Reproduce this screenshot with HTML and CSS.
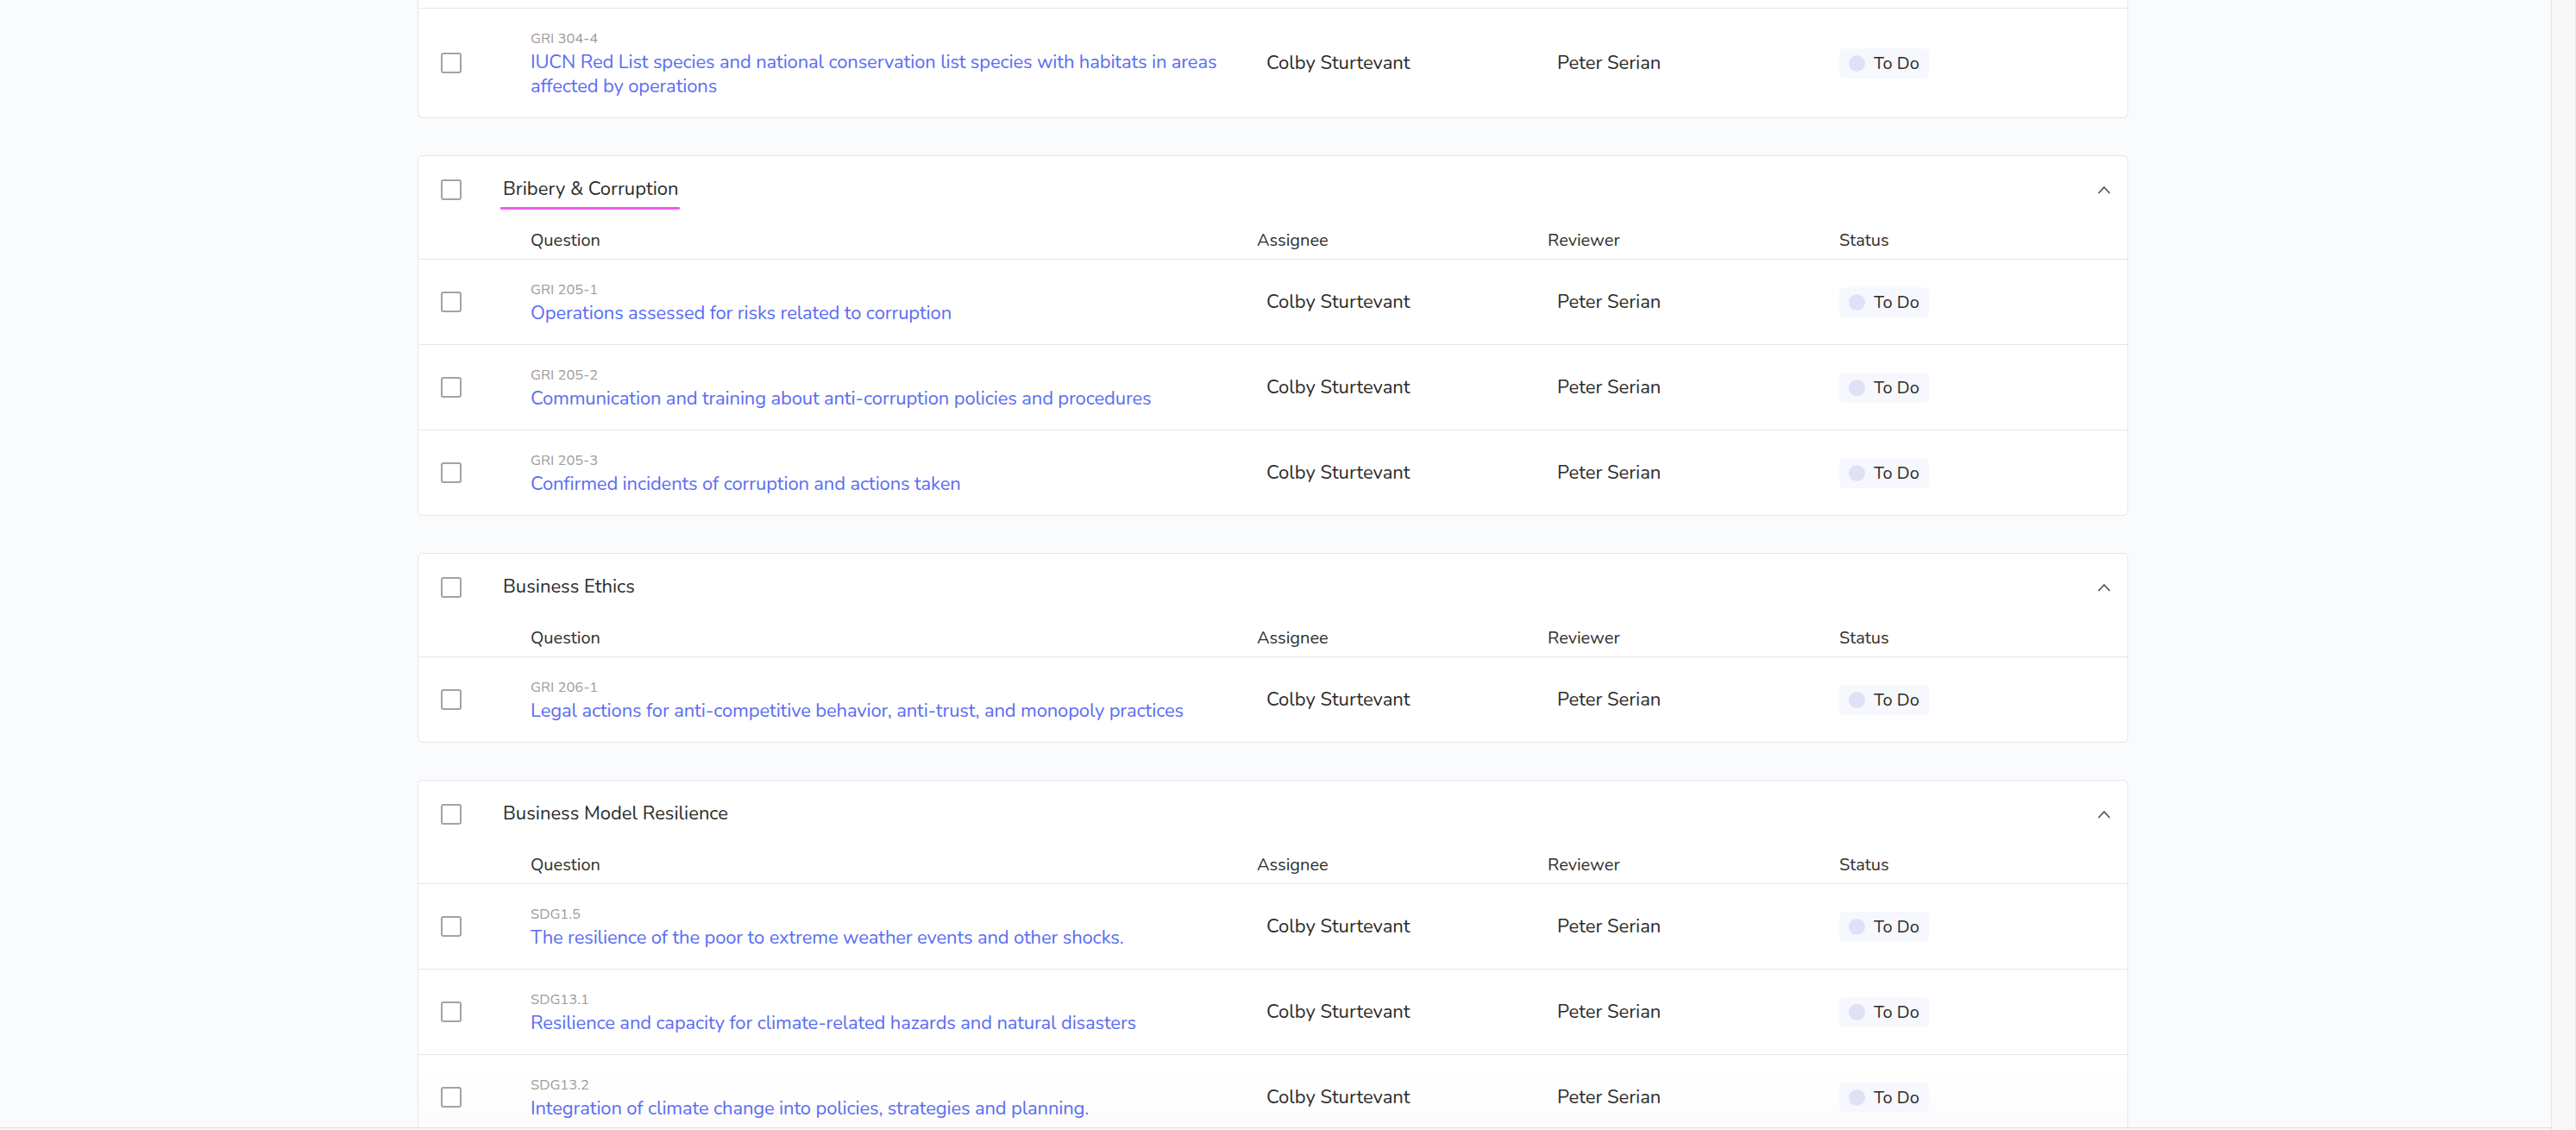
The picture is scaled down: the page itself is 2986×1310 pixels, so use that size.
FILE: index.html
```html
<!DOCTYPE html>
<html lang="en">
<head>
<meta charset="utf-8">
<title>Questions</title>
<link rel="stylesheet" href="styles.css">
</head>
<body>
<div class="window">
  <main class="viewport">
    <div class="list">

      <section class="card card--cut">
        <div class="row">
          <div class="cell-check"><span class="checkbox"></span></div>
          <div class="cell-question">
            <div class="code">GRI 304-4</div>
            <a class="question">IUCN Red List species and national conservation list species with habitats in areas affected by operations</a>
          </div>
          <div class="cell-person">Colby Sturtevant</div>
          <div class="cell-person">Peter Serian</div>
          <div class="cell-status"><span class="pill"><span class="dot"></span>To Do</span></div>
        </div>
      </section>

      <section class="card">
        <div class="card-head">
          <span class="checkbox"></span>
          <span class="title title--active">Bribery &amp; Corruption</span>
          <svg class="chevron" viewBox="0 0 16 10" width="16" height="10"><polyline points="2,8.5 8,2 14,8.5" fill="none" stroke="#555" stroke-width="1.8" stroke-linecap="round" stroke-linejoin="round"/></svg>
        </div>
        <div class="col-head">
          <div></div>
          <div>Question</div>
          <div>Assignee</div>
          <div>Reviewer</div>
          <div>Status</div>
        </div>
        <div class="row">
          <div class="cell-check"><span class="checkbox"></span></div>
          <div class="cell-question">
            <div class="code">GRI 205-1</div>
            <a class="question">Operations assessed for risks related to corruption</a>
          </div>
          <div class="cell-person">Colby Sturtevant</div>
          <div class="cell-person">Peter Serian</div>
          <div class="cell-status"><span class="pill"><span class="dot"></span>To Do</span></div>
        </div>
        <div class="row">
          <div class="cell-check"><span class="checkbox"></span></div>
          <div class="cell-question">
            <div class="code">GRI 205-2</div>
            <a class="question">Communication and training about anti-corruption policies and procedures</a>
          </div>
          <div class="cell-person">Colby Sturtevant</div>
          <div class="cell-person">Peter Serian</div>
          <div class="cell-status"><span class="pill"><span class="dot"></span>To Do</span></div>
        </div>
        <div class="row">
          <div class="cell-check"><span class="checkbox"></span></div>
          <div class="cell-question">
            <div class="code">GRI 205-3</div>
            <a class="question">Confirmed incidents of corruption and actions taken</a>
          </div>
          <div class="cell-person">Colby Sturtevant</div>
          <div class="cell-person">Peter Serian</div>
          <div class="cell-status"><span class="pill"><span class="dot"></span>To Do</span></div>
        </div>
      </section>

      <section class="card">
        <div class="card-head">
          <span class="checkbox"></span>
          <span class="title">Business Ethics</span>
          <svg class="chevron" viewBox="0 0 16 10" width="16" height="10"><polyline points="2,8.5 8,2 14,8.5" fill="none" stroke="#555" stroke-width="1.8" stroke-linecap="round" stroke-linejoin="round"/></svg>
        </div>
        <div class="col-head">
          <div></div>
          <div>Question</div>
          <div>Assignee</div>
          <div>Reviewer</div>
          <div>Status</div>
        </div>
        <div class="row">
          <div class="cell-check"><span class="checkbox"></span></div>
          <div class="cell-question">
            <div class="code">GRI 206-1</div>
            <a class="question">Legal actions for anti-competitive behavior, anti-trust, and monopoly practices</a>
          </div>
          <div class="cell-person">Colby Sturtevant</div>
          <div class="cell-person">Peter Serian</div>
          <div class="cell-status"><span class="pill"><span class="dot"></span>To Do</span></div>
        </div>
      </section>

      <section class="card card--last">
        <div class="card-head">
          <span class="checkbox"></span>
          <span class="title">Business Model Resilience</span>
          <svg class="chevron" viewBox="0 0 16 10" width="16" height="10"><polyline points="2,8.5 8,2 14,8.5" fill="none" stroke="#555" stroke-width="1.8" stroke-linecap="round" stroke-linejoin="round"/></svg>
        </div>
        <div class="col-head">
          <div></div>
          <div>Question</div>
          <div>Assignee</div>
          <div>Reviewer</div>
          <div>Status</div>
        </div>
        <div class="row">
          <div class="cell-check"><span class="checkbox"></span></div>
          <div class="cell-question">
            <div class="code">SDG1.5</div>
            <a class="question">The resilience of the poor to extreme weather events and other shocks.</a>
          </div>
          <div class="cell-person">Colby Sturtevant</div>
          <div class="cell-person">Peter Serian</div>
          <div class="cell-status"><span class="pill"><span class="dot"></span>To Do</span></div>
        </div>
        <div class="row">
          <div class="cell-check"><span class="checkbox"></span></div>
          <div class="cell-question">
            <div class="code">SDG13.1</div>
            <a class="question">Resilience and capacity for climate-related hazards and natural disasters</a>
          </div>
          <div class="cell-person">Colby Sturtevant</div>
          <div class="cell-person">Peter Serian</div>
          <div class="cell-status"><span class="pill"><span class="dot"></span>To Do</span></div>
        </div>
        <div class="row">
          <div class="cell-check"><span class="checkbox"></span></div>
          <div class="cell-question">
            <div class="code">SDG13.2</div>
            <a class="question">Integration of climate change into policies, strategies and planning.</a>
          </div>
          <div class="cell-person">Colby Sturtevant</div>
          <div class="cell-person">Peter Serian</div>
          <div class="cell-status"><span class="pill"><span class="dot"></span>To Do</span></div>
        </div>
      </section>

    </div>
  </main>
  <div class="vscroll"></div>
</div>
</body>
</html>
```

FILE: styles.css
```css
* { box-sizing: border-box; }

html, body {
  margin: 0;
  padding: 0;
  height: 1310px;
  overflow: hidden;
  background: #fafbfd;
  font-family: "Nunito", "Lato", "Noto Sans", sans-serif;
  color: #2e2e2e;
}

.window {
  display: flex;
  height: 1310px;
}

.viewport {
  flex: 1;
  height: 1308px;
  overflow: hidden;
  border-bottom: 1px solid #dedede;
  background: #fafbfd;
}

.vscroll {
  width: 29px;
  height: 1310px;
  background: #f8f8f8;
  border-left: 1px solid #e6e6e6;
  border-right: 1px solid #ececec;
}

.list {
  display: flex;
  flex-direction: column;
  gap: 43px;
  padding-left: 484px;
}

.card {
  width: 1983px;
  background: #fff;
  border: 1px solid #e4e5ea;
  border-radius: 6px;
}

.card--cut {
  border-top: none;
  border-radius: 0 0 6px 6px;
  padding-top: 9px;
}

.card--cut .row {
  border-top: 1px solid #e6e6e6;
  border-bottom: none;
}

.card--last {
  background: linear-gradient(to bottom, #fff 0, #fff 330px, #fcfcfd 400px);
}

.checkbox {
  display: inline-block;
  width: 24px;
  height: 24px;
  border: 2.5px solid #a3a3a3;
  border-radius: 3px;
  background: #fff;
  flex: none;
}

.card-head {
  height: 78px;
  display: flex;
  align-items: center;
  padding-left: 26px;
  padding-right: 19px;
}

.title {
  position: relative;
  margin-left: 48px;
  margin-top: -2px;
  font-size: 22px;
  line-height: 30px;
  color: #2b2b2b;
  flex: 1;
}

.title--active::after {
  content: "";
  position: absolute;
  left: -3px;
  top: 36px;
  width: 208px;
  height: 3px;
  border-radius: 1px;
  background: #ec5cf4;
}

.chevron {
  flex: none;
}

.col-head,
.row {
  display: grid;
  grid-template-columns: 130px 842px 337px 338px 1fr;
  align-items: center;
}

.col-head {
  height: 42px;
  border-bottom: 1px solid #e6e6e6;
  font-size: 20px;
  color: #2e2e2e;
  padding-bottom: 2px;
}

.row {
  padding: 22px 0;
  border-bottom: 1px solid #e6e6e6;
}

.row:last-child {
  border-bottom: none;
}

.cell-check {
  padding-left: 26px;
  display: flex;
  align-items: center;
}

.cell-question {
  padding-right: 20px;
}

.code {
  font-size: 16.5px;
  line-height: 26px;
  color: #9c9c9c;
}

.question {
  display: block;
  font-size: 22px;
  line-height: 28px;
  letter-spacing: -0.15px;
  color: #5a6df2;
  text-decoration: none;
}

.cell-person {
  padding-left: 11px;
  font-size: 22px;
  color: #2b2b2b;
}

.pill {
  display: inline-flex;
  align-items: center;
  gap: 10px;
  height: 35px;
  padding: 0 11px;
  border-radius: 6px;
  background: #f7f8fd;
  font-size: 20px;
  color: #2b2b2b;
}

.dot {
  width: 19px;
  height: 19px;
  border-radius: 50%;
  background: #dfe2f6;
}
```
